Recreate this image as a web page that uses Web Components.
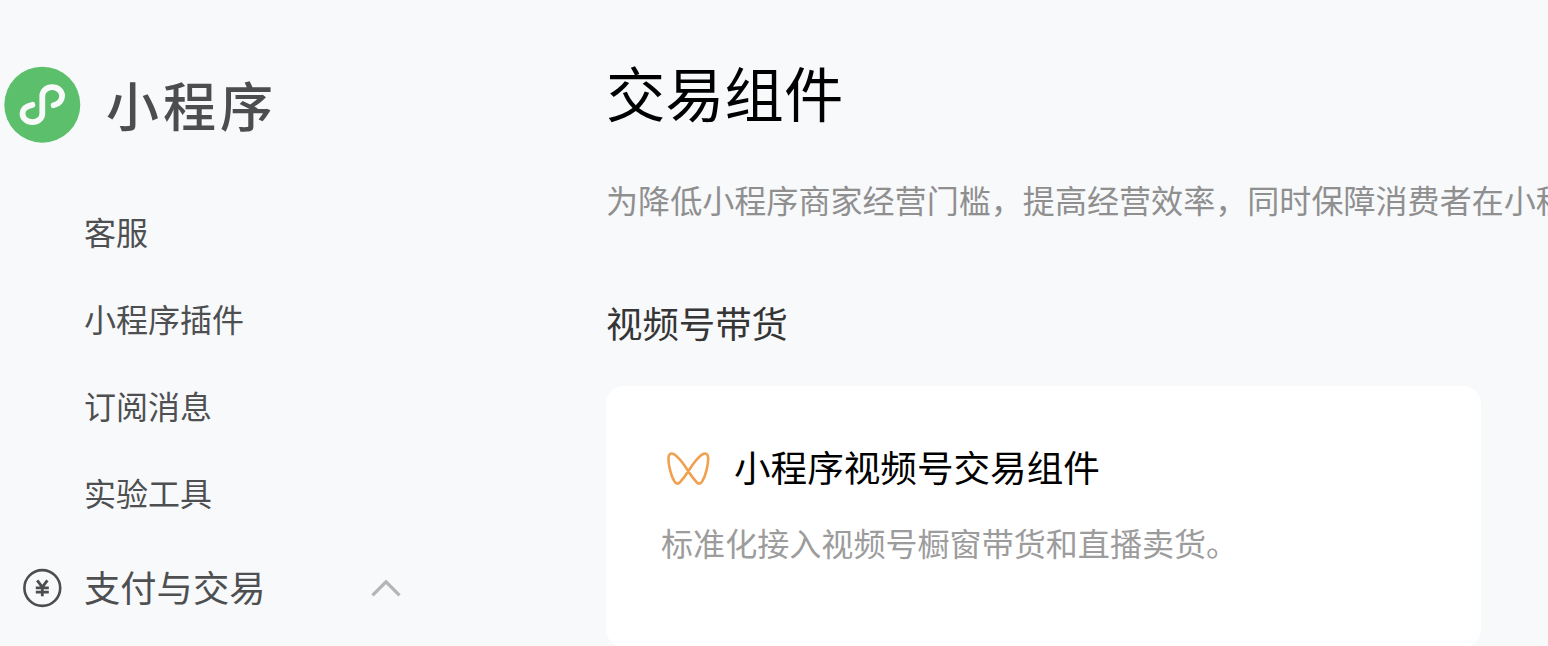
<!DOCTYPE html>
<html lang="zh-CN">
<head>
<meta charset="UTF-8">
<title>交易组件</title>
<style>
    html, body {
        margin: 0;
        height: 100%;
        overflow: hidden;
        background: #f8f9fb;
        font-family: "Noto Sans CJK SC", "Noto Sans", sans-serif;
    }
</style>
</head>
<body>
<mp-layout>
    <mp-brand slot="side">小程序</mp-brand>
    <mp-menu slot="side">
        <mp-menu-item>客服</mp-menu-item>
        <mp-menu-item>小程序插件</mp-menu-item>
        <mp-menu-item>订阅消息</mp-menu-item>
        <mp-menu-item>实验工具</mp-menu-item>
        <mp-menu-group>支付与交易</mp-menu-group>
    </mp-menu>
    <mp-page-header>
        <span slot="title">交易组件</span>
        为降低小程序商家经营门槛，提高经营效率，同时保障消费者在小程
    </mp-page-header>
    <mp-section>
        <span slot="title">视频号带货</span>
        <mp-card>
            <span slot="title">小程序视频号交易组件</span>
            标准化接入视频号橱窗带货和直播卖货。
        </mp-card>
    </mp-section>
</mp-layout>

<script>
class MpLayout extends HTMLElement {
    connectedCallback() {
        this.attachShadow({ mode: 'open' });
        this.shadowRoot.innerHTML = `
            <style>
                :host {
                    display: grid;
                    grid-template-columns: 606px minmax(0, 1fr);
                    height: 100vh;
                    overflow: hidden;
                }

                aside {
                    box-sizing: border-box;
                    padding-top: 65px;
                }

                main {
                    box-sizing: border-box;
                    padding-top: 46px;
                    overflow: hidden;
                }
            </style>
            <aside><slot name="side"></slot></aside>
            <main><slot></slot></main>
        `;
    }
}

class MpBrand extends HTMLElement {
    connectedCallback() {
        this.attachShadow({ mode: 'open' });
        this.shadowRoot.innerHTML = `
            <style>
                :host {
                    display: flex;
                    align-items: center;
                    gap: 25px;
                    height: 78px;
                    padding-left: 4px;
                    color: #4c4d4f;
                    font-size: 53px;
                    font-weight: 500;
                    line-height: 78px;
                    letter-spacing: 4px;
                }

                svg {
                    flex: none;
                }
            </style>
            <svg width="77" height="77" viewBox="0 0 77 77" fill="none">
                <circle cx="38.3" cy="38.7" r="38" fill="#5bbf6c"/>
                <path d="M28.4 38.8C22.3 40.1 18.5 43.2 18.5 47.4C18.5 52.3 22.9 56.2 28.4 56.2C34 56.2 38.3 52.3 38.3 47.4V30C38.3 25.1 42.6 21.2 48.2 21.2C53.7 21.2 58.1 25.1 58.1 30C58.1 34.2 55 37.9 49.6 39.2" stroke="#f8faf9" stroke-width="5.8" stroke-linecap="round"/>
            </svg>
            <slot></slot>
        `;
    }
}

class MpMenu extends HTMLElement {
    connectedCallback() {
        this.attachShadow({ mode: 'open' });
        this.shadowRoot.innerHTML = `
            <style>
                :host {
                    display: flex;
                    flex-direction: column;
                    margin-top: 45px;
                }
            </style>
            <slot></slot>
        `;
    }
}

class MpMenuItem extends HTMLElement {
    connectedCallback() {
        this.attachShadow({ mode: 'open' });
        this.shadowRoot.innerHTML = `
            <style>
                :host {
                    display: block;
                    height: 87px;
                    padding-left: 84px;
                    color: #4e4f50;
                    font-size: 32px;
                    line-height: 87px;
                }
            </style>
            <slot></slot>
        `;
    }
}

class MpMenuGroup extends HTMLElement {
    connectedCallback() {
        this.attachShadow({ mode: 'open' });
        this.shadowRoot.innerHTML = `
            <style>
                :host {
                    display: flex;
                    align-items: center;
                    width: 402px;
                    height: 100px;
                    padding-left: 22px;
                    box-sizing: border-box;
                    color: #4e4f50;
                    font-size: 36.3px;
                    line-height: 100px;
                }

                .label {
                    flex: 1;
                    padding-left: 22px;
                }

                svg {
                    flex: none;
                    margin-top: 4px;
                }
            </style>
            <svg width="40" height="40" viewBox="0 0 40 40" fill="none" stroke="#4c4d4f">
                <circle cx="20.3" cy="20" r="17.9" stroke-width="2.6"/>
                <path d="M15.2 12.4L20.3 19.2L25.4 12.4M20.3 19.2V28.2M13.8 19.8H26.8M13.8 24.2H26.8" stroke-width="2.8"/>
            </svg>
            <span class="label"><slot></slot></span>
            <svg width="32" height="20" viewBox="0 0 32 20" fill="none">
                <path d="M2.5 17.4L16 3.8L29.5 17.4" stroke="#b4b5b7" stroke-width="3.2"/>
            </svg>
        `;
    }
}

class MpPageHeader extends HTMLElement {
    connectedCallback() {
        this.attachShadow({ mode: 'open' });
        this.shadowRoot.innerHTML = `
            <style>
                :host {
                    display: block;
                }

                h1 {
                    margin: 0;
                    color: #000;
                    font-size: 59.3px;
                    font-weight: 400;
                    line-height: 90px;
                }

                p {
                    margin: 38px 0 0;
                    color: #8f8f90;
                    font-size: 32.07px;
                    line-height: 50px;
                    white-space: nowrap;
                }
            </style>
            <h1><slot name="title"></slot></h1>
            <p><slot></slot></p>
        `;
    }
}

class MpSection extends HTMLElement {
    connectedCallback() {
        this.attachShadow({ mode: 'open' });
        this.shadowRoot.innerHTML = `
            <style>
                :host {
                    display: block;
                    margin-top: 69px;
                }

                h2 {
                    margin: 0 0 35px;
                    color: #353535;
                    font-size: 36.4px;
                    font-weight: 400;
                    line-height: 58px;
                }
            </style>
            <h2><slot name="title"></slot></h2>
            <slot></slot>
        `;
    }
}

class MpCard extends HTMLElement {
    connectedCallback() {
        this.attachShadow({ mode: 'open' });
        this.shadowRoot.innerHTML = `
            <style>
                :host {
                    display: block;
                    box-sizing: border-box;
                    width: 875px;
                    height: 261px;
                    padding: 53px 55px;
                    border-radius: 18px;
                    background: #fff;
                }

                .head {
                    display: flex;
                    align-items: center;
                    gap: 21px;
                    color: #000;
                    font-size: 36.6px;
                    line-height: 56px;
                }

                svg {
                    flex: none;
                    margin-top: 3px;
                }

                p {
                    margin: 22px 0 0;
                    color: #9c9c9c;
                    font-size: 32.07px;
                    line-height: 50px;
                }
            </style>
            <div class="head">
                <svg width="52" height="40" viewBox="0 0 52 40" fill="none">
                    <path d="M27.3 22.2C23 15.5 17.5 7.8 12.9 5.2C9.8 3.5 7.4 5 7.4 9.2C7.4 16 9.9 26.5 13.2 32C14.8 35 17 35.5 19.1 33.1C22 29.8 24.5 26.5 27.3 22.2C31.6 15.5 37.1 7.8 41.7 5.2C44.8 3.5 47.2 5 47.2 9.2C47.2 16 44.7 26.5 41.4 32C39.8 35 37.6 35.5 35.5 33.1C32.6 29.8 30.1 26.5 27.3 22.2Z" stroke="#f0a04e" stroke-width="2.6" stroke-linejoin="round"/>
                </svg>
                <slot name="title"></slot>
            </div>
            <p><slot></slot></p>
        `;
    }
}

customElements.define('mp-layout', MpLayout);
customElements.define('mp-brand', MpBrand);
customElements.define('mp-menu', MpMenu);
customElements.define('mp-menu-item', MpMenuItem);
customElements.define('mp-menu-group', MpMenuGroup);
customElements.define('mp-page-header', MpPageHeader);
customElements.define('mp-section', MpSection);
customElements.define('mp-card', MpCard);
</script>
</body>
</html>
